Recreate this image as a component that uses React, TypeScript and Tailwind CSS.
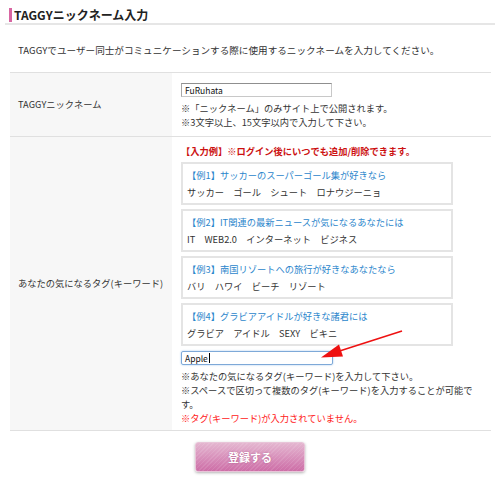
import React from 'react'

const examples = [
  { title: '【例1】サッカーのスーパーゴール集が好きなら', words: 'サッカー　ゴール　シュート　ロナウジーニョ' },
  { title: '【例2】IT関連の最新ニュースが気になるあなたには', words: 'IT　WEB2.0　インターネット　ビジネス' },
  { title: '【例3】南国リゾートへの旅行が好きなあなたなら', words: 'バリ　ハワイ　ビーチ　リゾート' },
  { title: '【例4】グラビアアイドルが好きな諸君には', words: 'グラビア　アイドル　SEXY　ビキニ' },
]

export default function App() {
  return (
    <div className="relative w-[500px] h-[483px] overflow-hidden bg-white px-[5px] text-[9.25px] text-[#333] font-['Noto_Sans_CJK_JP',sans-serif]">
      {/* heading */}
      <div className="flex items-center pt-[8px] pb-[1px] pl-[4px] border-b-2 border-[#e6e6e6]">
        <span className="w-[3px] h-[14px] bg-[#d866a2] mr-[2px]" />
        <h1 className="text-[12px] leading-[14px] font-bold text-[#222]">TAGGYニックネーム入力</h1>
      </div>

      <p className="mt-[18px] pl-[13px] leading-[14px] text-[9.6px]">
        TAGGYでユーザー同士がコミュニケーションする際に使用するニックネームを入力してください。
      </p>

      {/* form table */}
      <div className="mt-[15px] ml-[5px] w-[481px] border-t border-[#e0e0e0]">
        <div className="flex border-b border-[#e0e0e0]">
          <div className="w-[162px] bg-[#f7f7f7] flex items-center pl-[8px]">TAGGYニックネーム</div>
          <div className="flex-1 pl-[9px] pt-[10px] pb-[7px]">
            <div className="w-[151px] h-[14px] border border-[#c8c8c8] border-t-[#8f8f8f] border-l-[#a8a8a8] flex items-center pl-[3px] text-[8.5px] text-[#111] leading-none">
              FuRuhata
            </div>
            <div className="mt-[4px] leading-[14px]">
              <div>※「ニックネーム」のみサイト上で公開されます。</div>
              <div>※3文字以上、15文字以内で入力して下さい。</div>
            </div>
          </div>
        </div>

        <div className="flex border-b border-[#e0e0e0]">
          <div className="w-[162px] bg-[#f7f7f7] flex items-center pl-[8px]">あなたの気になるタグ(キーワード)</div>
          <div className="flex-1 pl-[9px] pt-[7px] pb-[5px]">
            <div className="leading-[14px] text-[#cc1111] font-bold">【入力例】※ログイン後にいつでも追加/削除できます。</div>
            <div className="mt-[4px] flex flex-col gap-[4px]">
              {examples.map((ex) => (
                <div key={ex.title} className="w-[272px] h-[43px] border-2 border-[#e4e4e4] pl-[4px] pt-[3px] leading-[17px] whitespace-nowrap">
                  <div className="text-[#2b86cc]">{ex.title}</div>
                  <div>{ex.words}</div>
                </div>
              ))}
            </div>
            <div className="mt-[5px] w-[152px] h-[14px] rounded-[2px] border border-[#7ea9d8] shadow-[0_0_2px_#9cc2ea] flex items-center pl-[3px] text-[8.5px] text-[#111] leading-none">
              Apple<span className="inline-block w-px h-[10px] bg-black ml-px" />
            </div>
            <div className="mt-[4px] leading-[14px] whitespace-nowrap">
              <div>※あなたの気になるタグ(キーワード)を入力して下さい。</div>
              <div>※スペースで区切って複数のタグ(キーワード)を入力することが可能で</div>
              <div>す。</div>
              <div className="text-[#ff2020]">※タグ(キーワード)が入力されていません。</div>
            </div>
          </div>
        </div>
      </div>

      <div className="mt-[11px] flex justify-center">
        <button className="w-[110px] h-[30px] rounded-[3px] border border-[#e8c4d8] shadow-[0_1px_3px_rgba(0,0,0,0.3)] bg-[repeating-linear-gradient(135deg,rgba(255,255,255,0.1)_0px,rgba(255,255,255,0.1)_1px,transparent_1px,transparent_3px),linear-gradient(to_bottom,#e4b6d0,#cd6ea7)] text-[11px] font-bold text-white [text-shadow:0_0_2px_rgba(150,60,110,0.6)]">
          登録する
        </button>
      </div>

      {/* annotation arrow */}
      <svg className="absolute left-0 top-0 pointer-events-none" width="500" height="483">
        <line x1="402" y1="331" x2="338" y2="351.5" stroke="#ee1111" strokeWidth="1.5" />
        <polygon points="321,357.5 343,356.5 339,344.5" fill="#ee1111" />
      </svg>
    </div>
  )
}
